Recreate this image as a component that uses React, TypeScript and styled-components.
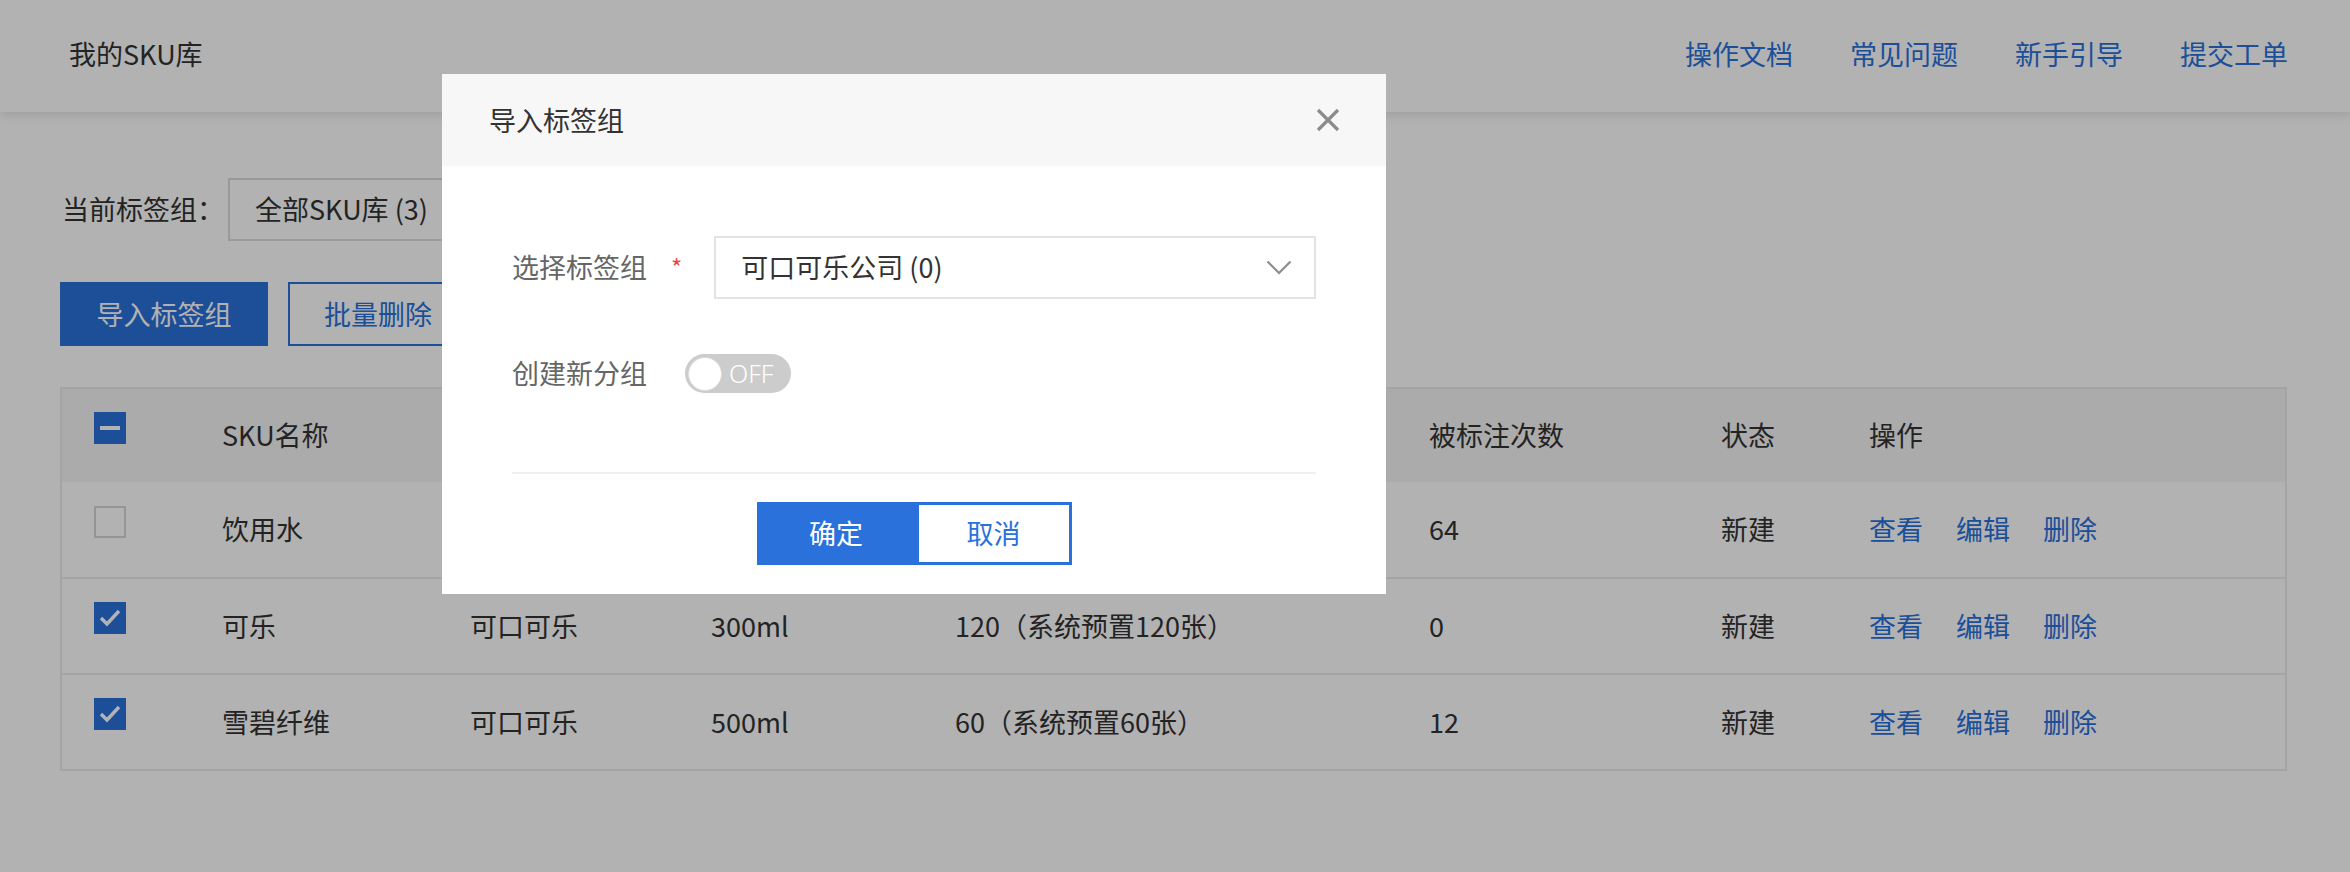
import React from "react";
import styled, { createGlobalStyle } from "styled-components";

const BLUE = "#2a71db";

const GlobalStyle = createGlobalStyle`
  html, body {
    margin: 0;
    padding: 0;
    background: #fff;
  }
  body {
    font-family: "Noto Sans CJK SC", "Noto Sans", sans-serif;
    color: #333;
    overflow: hidden;
  }
  * { box-sizing: border-box; }
`;

const Page = styled.div`
  position: relative;
  width: 2350px;
  height: 872px;
  background: #fff;
  font-size: 27px;
  line-height: 1.2;
`;

const Header = styled.header`
  height: 112px;
  display: flex;
  align-items: center;
  justify-content: space-between;
  padding: 0 62px 4px 69px;
  background: #fff;
  box-shadow: 0 3px 10px rgba(0, 0, 0, 0.12);
`;

const Title = styled.div`
  color: #333;
`;

const Nav = styled.nav`
  display: flex;
  gap: 57px;
`;

const NavLink = styled.a`
  color: ${BLUE};
  text-decoration: none;
`;

const Main = styled.main`
  padding: 66px 63px 0 60px;
`;

const FilterRow = styled.div`
  display: flex;
  align-items: center;
  height: 63px;
`;

const FilterLabel = styled.span`
  margin-left: 2px;
  color: #333;
`;

const FilterSelect = styled.div`
  margin-left: 4px;
  width: 300px;
  height: 63px;
  border: 2px solid #dcdcdc;
  display: flex;
  align-items: center;
  padding-left: 25px;
  color: #333;
`;

const Toolbar = styled.div`
  display: flex;
  gap: 20px;
  margin-top: 41px;
`;

const Button = styled.button<{ $primary?: boolean; $width: number }>`
  width: ${(p) => p.$width}px;
  height: 64px;
  font: inherit;
  font-size: 27px;
  cursor: pointer;
  border: 2px solid ${BLUE};
  background: ${(p) => (p.$primary ? BLUE : "#fff")};
  color: ${(p) => (p.$primary ? "#fff" : BLUE)};
  padding: 0;
`;

const Table = styled.div`
  margin-top: 41px;
  width: 2227px;
  border: 2px solid #ebebeb;
`;

const COLS = "126px 248px 241px 244px 474px 292px 148px 1fr";

const HeadRow = styled.div`
  display: grid;
  grid-template-columns: ${COLS};
  height: 93px;
  background: #f5f5f5;
  align-items: center;
`;

const BodyRow = styled.div`
  display: grid;
  grid-template-columns: ${COLS};
  height: 96px;
  align-items: center;
  border-top: 2px solid #ebebeb;
  &:first-child { border-top: none; height: 95px; }
`;

const Cell = styled.div<{ $first?: boolean }>`
  padding-left: ${(p) => (p.$first ? 32 : 34)}px;
  color: #333;
  white-space: nowrap;
  display: flex;
  align-items: center;
`;

const Actions = styled.div`
  display: flex;
  gap: 33px;
`;

const ActionLink = styled.a`
  color: ${BLUE};
  text-decoration: none;
`;

const Box = styled.span<{ $state: "none" | "some" | "all" }>`
  width: 32px;
  height: 32px;
  margin-top: -16px;
  display: inline-flex;
  align-items: center;
  justify-content: center;
  background: ${(p) => (p.$state === "none" ? "#fff" : BLUE)};
  border: ${(p) => (p.$state === "none" ? "2px solid #d6d6d6" : "none")};
`;

const Checkbox = ({ state }: { state: "none" | "some" | "all" }) => (
  <Box $state={state}>
    {state === "some" && (
      <svg width="20" height="4" viewBox="0 0 20 4">
        <rect width="20" height="4" fill="#fff" />
      </svg>
    )}
    {state === "all" && (
      <svg width="24" height="20" viewBox="0 0 24 20">
        <path d="M3 10 L9 16 L21 3" stroke="#fff" strokeWidth="3.5" fill="none" />
      </svg>
    )}
  </Box>
);

const Overlay = styled.div`
  position: absolute;
  inset: 0;
  background: rgba(0, 0, 0, 0.3);
`;

const Modal = styled.div`
  position: absolute;
  left: 442px;
  top: 74px;
  width: 944px;
  height: 520px;
  background: #fff;
  display: flex;
  flex-direction: column;
`;

const ModalHeader = styled.div`
  height: 92px;
  flex: none;
  background: #f7f7f7;
  display: flex;
  align-items: center;
  justify-content: space-between;
  padding: 0 46px 0 47px;
  color: #333;
`;

const ModalBody = styled.div`
  padding: 70px 70px 0;
`;

const FormRow = styled.div<{ $top?: number }>`
  display: flex;
  align-items: center;
  margin-top: ${(p) => p.$top || 0}px;
`;

const FormLabel = styled.span`
  color: #666;
  flex: none;
`;

const Required = styled.span`
  color: #e54848;
  margin-left: 24px;
  font-size: 24px;
`;

const ModalSelect = styled.div<{ $offset: number }>`
  flex: 1;
  margin-left: ${(p) => p.$offset}px;
  height: 63px;
  border: 2px solid #e3e3e3;
  display: flex;
  align-items: center;
  justify-content: space-between;
  padding: 0 22px 0 25px;
  color: #333;
`;

const Switch = styled.div<{ $offset: number }>`
  margin-left: ${(p) => p.$offset}px;
  width: 106px;
  height: 39px;
  border-radius: 20px;
  background: #cccccc;
  display: flex;
  align-items: center;
  padding-left: 3px;
  flex: none;
`;

const Knob = styled.span`
  width: 34px;
  height: 34px;
  border-radius: 50%;
  background: #fff;
  border: 1px solid #dcdcdc;
  flex: none;
`;

const SwitchText = styled.span`
  margin-left: 7px;
  color: #fff;
  font-size: 25px;
  line-height: 1;
  font-weight: 300;
  font-family: "Noto Sans", "Open Sans", sans-serif;
`;

const Divider = styled.div`
  margin-top: 79px;
  height: 2px;
  background: #edf0f4;
`;

const Footer = styled.div`
  display: flex;
  justify-content: center;
  margin-top: 28px;
`;

const FooterButton = styled.button<{ $primary?: boolean; $width: number }>`
  width: ${(p) => p.$width}px;
  height: 63px;
  padding: 0;
  font: inherit;
  font-size: 27px;
  border: 3px solid ${BLUE};
  background: ${(p) => (p.$primary ? BLUE : "#fff")};
  color: ${(p) => (p.$primary ? "#fff" : BLUE)};
`;

const rows = [
  { name: "饮用水", brand: "农夫山泉", spec: "550ml", pics: "64（系统预置64张）", marks: "64", checked: false },
  { name: "可乐", brand: "可口可乐", spec: "300ml", pics: "120（系统预置120张）", marks: "0", checked: true },
  { name: "雪碧纤维", brand: "可口可乐", spec: "500ml", pics: "60（系统预置60张）", marks: "12", checked: true },
];

export default function App() {
  return (
    <Page>
      <GlobalStyle />
      <Header>
        <Title>我的SKU库</Title>
        <Nav>
          <NavLink>操作文档</NavLink>
          <NavLink>常见问题</NavLink>
          <NavLink>新手引导</NavLink>
          <NavLink>提交工单</NavLink>
        </Nav>
      </Header>
      <Main>
        <FilterRow>
          <FilterLabel>当前标签组：</FilterLabel>
          <FilterSelect>全部SKU库 (3)</FilterSelect>
        </FilterRow>
        <Toolbar>
          <Button $primary $width={208}>导入标签组</Button>
          <Button $width={180}>批量删除</Button>
        </Toolbar>
        <Table>
          <HeadRow>
            <Cell $first><Checkbox state="some" /></Cell>
            <Cell>SKU名称</Cell>
            <Cell>品牌</Cell>
            <Cell>规格</Cell>
            <Cell>样本图片数</Cell>
            <Cell>被标注次数</Cell>
            <Cell>状态</Cell>
            <Cell>操作</Cell>
          </HeadRow>
          <div>
            {rows.map((r) => (
              <BodyRow key={r.name}>
                <Cell $first><Checkbox state={r.checked ? "all" : "none"} /></Cell>
                <Cell>{r.name}</Cell>
                <Cell>{r.brand}</Cell>
                <Cell>{r.spec}</Cell>
                <Cell>{r.pics}</Cell>
                <Cell>{r.marks}</Cell>
                <Cell>新建</Cell>
                <Cell>
                  <Actions>
                    <ActionLink>查看</ActionLink>
                    <ActionLink>编辑</ActionLink>
                    <ActionLink>删除</ActionLink>
                  </Actions>
                </Cell>
              </BodyRow>
            ))}
          </div>
        </Table>
      </Main>
      <Overlay>
        <Modal>
          <ModalHeader>
            <span>导入标签组</span>
            <svg width="24" height="24" viewBox="0 0 24 24">
              <path d="M2 2 L22 22 M22 2 L2 22" stroke="#8c8c8c" strokeWidth="3.2" />
            </svg>
          </ModalHeader>
          <ModalBody>
            <FormRow>
              <FormLabel>选择标签组</FormLabel>
              <Required>*</Required>
              <ModalSelect $offset={32}>
                <span>可口可乐公司 (0)</span>
                <svg width="26" height="15" viewBox="0 0 26 15">
                  <path d="M1.5 1.5 L13 13 L24.5 1.5" stroke="#8c8c8c" strokeWidth="2.2" fill="none" />
                </svg>
              </ModalSelect>
            </FormRow>
            <FormRow $top={55}>
              <FormLabel>创建新分组</FormLabel>
              <Switch $offset={38}>
                <Knob />
                <SwitchText>OFF</SwitchText>
              </Switch>
            </FormRow>
            <Divider />
            <Footer>
              <FooterButton $primary $width={159}>确定</FooterButton>
              <FooterButton $width={156}>取消</FooterButton>
            </Footer>
          </ModalBody>
        </Modal>
      </Overlay>
    </Page>
  );
}
